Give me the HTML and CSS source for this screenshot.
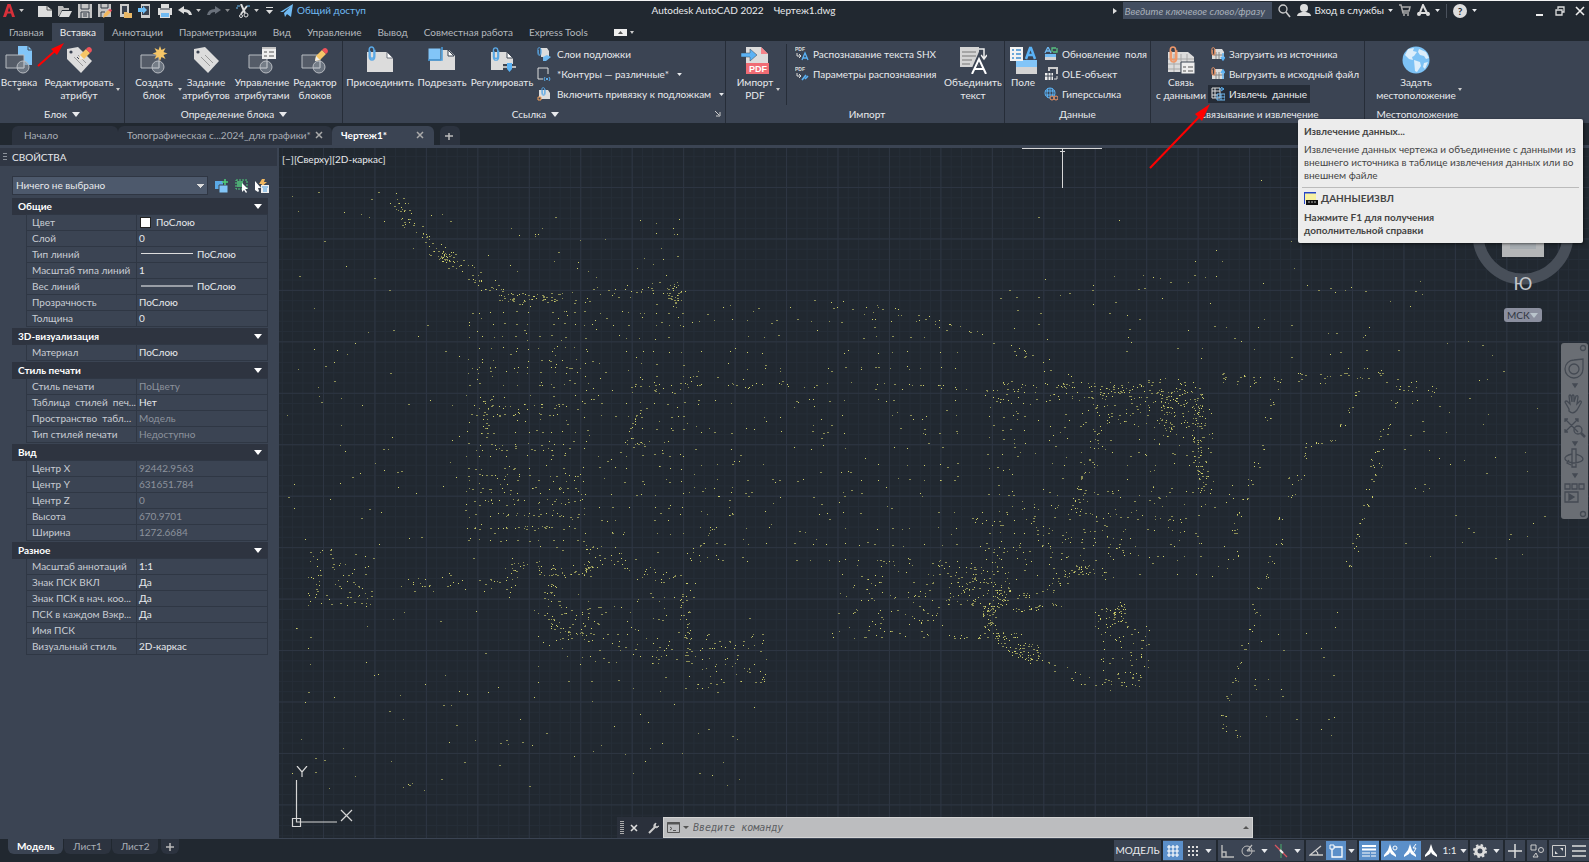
FILE: index.html
```html
<!DOCTYPE html>
<html lang="ru">
<head>
<meta charset="utf-8">
<title>Autodesk AutoCAD 2022 — Чертеж1.dwg</title>
<link rel="stylesheet" href="styles.css">
</head>
<body>
<svg class="defs" aria-hidden="true">
  <defs>
    <symbol id="caret" viewBox="0 0 8 5"><path d="M0 0h8L4 5z" fill="currentColor"/></symbol>
    <symbol id="block" viewBox="0 0 28 28"><path d="M1 9h18v13H1z" fill="#555c68" stroke="#b8bcc2"/><circle cx="18" cy="21" r="6" fill="#8b929d" fill-opacity=".6" stroke="#b8bcc2"/><path d="M19 15v7h-7" fill="none" stroke="#b8bcc2"/></symbol>
    <symbol id="tag" viewBox="0 0 28 28"><path d="M2 3l11-2 14 14-11 12L2 13z" fill="#dcdcdc"/><circle cx="6" cy="6" r="1.6" fill="#3b4453"/><path d="M9 11l9 9M13 9l8 8" stroke="#9a9a9a" fill="none"/></symbol>
    <symbol id="pencil" viewBox="0 0 14 14"><path d="M1 13l1-5 6-6 4 4-6 6z" fill="#f6c667"/><path d="M8 2l1.500-1.500q2-1 3.500.5t.5 3.500L12 6z" fill="#f0525a"/><path d="M1 13l1-5 4 4z" fill="#eee"/></symbol>
    <symbol id="sheet" viewBox="0 0 28 28"><path d="M1 6h20l6 6v14H1z" fill="#dcdcdc"/><path d="M21 6v6h6z" fill="#fff" stroke="#3b4453" stroke-width=".7"/></symbol>
    <symbol id="clip" viewBox="0 0 8 16"><path d="M2 5v6q0 2 2 2t2-2V4q0-3-2.500-3T1 4v7q0 4 3 4t3-4V4" fill="none" stroke="currentColor" stroke-width="1.500"/></symbol>
    <symbol id="arrowA" viewBox="0 0 14 14"><path d="M7 0l2 6 4 5v2L8 10 7 8l-1 2-5 3v-2l4-5z" fill="#fff"/></symbol>
  </defs>
</svg>

<header class="titlebar">
  <div class="quick">
    <button class="app" aria-label="Меню приложения"><svg viewBox="0 0 12 13" width="12" height="13"><path d="M0 13L4.500 0h3L12 13H9L8 9.500H4.500L3 13zM5 7.500h2.500L6 3z" fill="#d8303a"/></svg><svg class="c" width="5" height="3"><use href="#caret"/></svg></button>
    <button aria-label="Новый"><svg width="14" height="14"><path d="M0 2h9l5 4v7H0z" fill="#ddd"/><path d="M9 2v4h5" fill="none" stroke="#555"/></svg></button>
    <button aria-label="Открыть"><svg width="14" height="14"><path d="M0 2h5l1 2h5v2H4L1 12H0z" fill="#b9b9b9"/><path d="M4 7h10l-3 6H1z" fill="#ddd"/></svg></button>
    <button aria-label="Сохранить"><svg width="14" height="14"><path d="M0 0h14v14H0z" fill="#c4c4c4"/><path d="M3 0v5h8V0M3 14V8h8v6M5 10h4M5 12h4" fill="none" stroke="#333b47"/></svg></button>
    <button aria-label="Сохранить как"><svg width="14" height="14"><path d="M0 0h13v13H0z" fill="#c4c4c4"/><path d="M3 0v4h7V0M3 13V8h4" fill="none" stroke="#333b47"/><path d="M5 14l1-4 4-4 3 2-4 4z" fill="#f2b860"/><path d="M10 6l3 2 1-2-2-1z" fill="#ed4c5c"/></svg></button>
    <button aria-label="Открыть с устройства"><svg width="14" height="14"><path d="M2 0h9v13H2z" fill="#ccc"/><path d="M4 2h5v8H4z" fill="#3a4250"/><path d="M6 8h3l1 1h4v5H6z" fill="#e9b765"/></svg></button>
    <button aria-label="Сохранить на устройство"><svg width="14" height="14"><path d="M3 0h9v14H3z" fill="#ccc"/><path d="M4 2h7v9H4z" fill="#3a4250"/><path d="M0 4h5V2l4 4-4 4V8H0z" fill="#6cbdf5"/></svg></button>
    <button aria-label="Печать"><svg width="14" height="14"><path d="M3 0h8v4h3v7h-2v3H2v-3H0V4h3z" fill="#ddd"/><path d="M2 5h10" stroke="#333b47"/><path d="M3 9h8v4H3z" fill="#70baf2"/></svg></button>
    <button aria-label="Отменить"><svg width="14" height="14"><path d="M0 6l6-4v3q7 0 8 6h-3q-1-3-5-3v2z" fill="#ddd"/></svg><svg class="c" width="5" height="3"><use href="#caret"/></svg></button>
    <button class="off" aria-label="Повторить"><svg width="14" height="14"><path d="M14 6L8 2v3q-7 0-8 6h3q1-3 5-3v2z" fill="#6a717b"/></svg><svg class="c" width="5" height="3"><use href="#caret"/></svg></button>
    <button aria-label="Вырезать"><svg width="14" height="14"><path d="M5 0l4 9M11 2L5 10" stroke="#ddd" stroke-width="2"/><circle cx="10" cy="11" r="2" fill="none" stroke="#ddd"/><circle cx="5" cy="12" r="1.500" fill="none" stroke="#ddd"/><path d="M1 2h3M0 4h2M11 2h3" stroke="#6cbdf5"/></svg><svg class="c" width="5" height="3"><use href="#caret"/></svg></button>
    <button aria-label="Настройка панели"><svg width="9" height="10"><path d="M1 1h7v1H1zM1 4h7L4.500 8z" fill="#ddd"/></svg></button>
    <button class="share"><svg width="13" height="13"><path d="M0 8L13 0l-2 13-4-3-2 3-1-4 6-6-7 5z" fill="#70baf2"/></svg>Общий доступ</button>
  </div>
  <div class="apptitle"><span>Autodesk AutoCAD 2022</span><span>Чертеж1.dwg</span></div>
  <div class="account">
    <svg width="4" height="6"><path d="M0 0l4 3-4 3z" fill="#ddd"/></svg>
    <input class="search" type="text" placeholder="Введите ключевое слово/фразу" aria-label="Поиск">
    <button aria-label="Найти"><svg width="13" height="14"><circle cx="5" cy="5" r="4" fill="none" stroke="#ccc" stroke-width="1.300"/><path d="M8 8l4 5" stroke="#ccc" stroke-width="1.600"/></svg></button>
    <button class="login"><svg width="14" height="13"><circle cx="7" cy="4" r="4" fill="#ddd"/><path d="M0 12q0-3 5-4h4q5 1 5 4z" fill="#ddd"/></svg>Вход в службы<svg class="c" width="5" height="3"><use href="#caret"/></svg></button>
    <button aria-label="Магазин"><svg width="12" height="13"><path d="M0 1h2l2 8h6M3 3h8l-1 4H4" fill="none" stroke="#aaa" stroke-width="1.500"/><circle cx="5" cy="11" r="1" fill="#aaa"/><circle cx="9" cy="11" r="1" fill="#aaa"/></svg></button>
    <button aria-label="Autodesk App Store"><svg width="13" height="13"><path d="M2 11L6 1l5 10M1 9h11" fill="none" stroke="#ddd" stroke-width="2"/><circle cx="2" cy="10" r="2" fill="#ddd"/><circle cx="11" cy="10" r="2" fill="#ddd"/></svg><svg class="c" width="5" height="3"><use href="#caret"/></svg></button>
    <i class="vsep"></i>
    <button class="help" aria-label="Справка"><b>?</b><svg class="c" width="5" height="3"><use href="#caret"/></svg></button>
    <div class="win">
      <button aria-label="Свернуть"><svg width="10" height="10"><path d="M1 9h7" stroke="#eee" stroke-width="2"/></svg></button>
      <button aria-label="Восстановить"><svg width="10" height="10"><path d="M3 3V1h6v5H7M1 4h6v5H1z" fill="none" stroke="#ddd" stroke-width="1.300"/></svg></button>
      <button aria-label="Закрыть"><svg width="10" height="10"><path d="M1 1l8 8M9 1L1 9" stroke="#eee" stroke-width="1.600"/></svg></button>
    </div>
  </div>
</header>

<nav class="menu">
  <button>Главная</button><button class="on">Вставка</button><button>Аннотации</button><button>Параметризация</button><button>Вид</button><button>Управление</button><button>Вывод</button><button>Совместная работа</button><button>Express Tools</button>
  <button aria-label="Вид ленты" class="mini"><svg width="20" height="7"><path d="M0 0h13v7H0z" fill="#eee"/><path d="M4 5l2.500-3L9 5z" fill="#555"/><path d="M16 2h4l-2 3z" fill="#ccc"/></svg></button>
</nav>

<section class="ribbon">
  <div class="panel p-block">
    <div class="tools">
      <button class="big w38 down"><svg width="28" height="28" viewBox="0 0 28 28"><path d="M13 0h10l4 4v15H13z" fill="#82c5f8"/><path d="M23 0v4h4" fill="none" stroke="#3b4453"/><use href="#block"/></svg><span>Вставка</span></button>
      <button class="big w80 side"><svg width="28" height="28" viewBox="0 0 28 28"><use href="#tag"/><path d="M15 14l-3-3" stroke="#3b4453"/><use href="#pencil" x="13" y="1" width="14" height="14"/></svg><span>Редактировать<br>атрибут</span></button>
    </div>
    <h2>Блок <svg width="8" height="5"><use href="#caret"/></svg></h2>
  </div>
  <div class="panel p-def">
    <div class="tools">
      <button class="big w56 side"><svg width="28" height="28" viewBox="0 0 28 28"><use href="#block"/><path d="M20 0l1.500 4 4-2-2 4 4 1.500-4 1.500 2 4-4-2-1.500 4-1.500-4-4 2 2-4-4-1.500 4-1.500-2-4 4 2z" fill="#f6c667"/></svg><span>Создать<br>блок</span></button>
      <button class="big w48"><svg width="28" height="28"><use href="#tag"/></svg><span>Задание<br>атрибутов</span></button>
      <button class="big w64"><svg width="28" height="28" viewBox="0 0 28 28"><use href="#block"/><path d="M14 1h14v12H14z" fill="#eee"/><path d="M14 2h14" stroke="#999"/><path d="M16 6h3M16 10h3M21 6h5M21 10h5" stroke="#555"/></svg><span>Управление<br>атрибутами</span></button>
      <button class="big w42"><svg width="28" height="28" viewBox="0 0 28 28"><use href="#block"/><use href="#pencil" x="13" y="2" width="14" height="14"/></svg><span>Редактор<br>блоков</span></button>
    </div>
    <h2>Определение блока <svg width="8" height="5"><use href="#caret"/></svg></h2>
  </div>
  <div class="panel p-ref">
    <div class="tools">
      <button class="big w68"><svg class="blue" width="28" height="28" viewBox="0 0 28 28"><use href="#sheet"/><use href="#clip" x="2" y="0" width="8" height="15"/></svg><span>Присоединить</span></button>
      <button class="big w56"><svg width="28" height="28" viewBox="0 0 28 28"><path d="M2 4h19l6 6v14H2z" fill="#dcdcdc"/><path d="M20 4v6h6z" fill="#fff" stroke="#3b4453"/><path d="M0 2h13v12H0z" fill="#82c5f8" stroke="#3b4453"/><path d="M0 14h14V1" fill="none" stroke="#4a9fe0" stroke-width="1.500"/></svg><span>Подрезать</span></button>
      <button class="big w64"><svg class="blue" width="28" height="28" viewBox="0 0 28 28"><path d="M3 6h16l6 6v12H3z" fill="#dcdcdc"/><path d="M19 6v6h6z" fill="#fff" stroke="#3b4453"/><use href="#clip" x="4" y="1" width="8" height="14"/><path d="M15 21h13" stroke="#3b4453" stroke-width="6"/><path d="M15 21h13" stroke="#bbb" stroke-width="2"/><path d="M19 17h5v6l-2.500 3-2.500-3z" fill="#5ab2f5"/></svg><span>Регулировать</span></button>
      <div class="stack">
        <button class="small"><svg class="blue" width="14" height="14" viewBox="0 0 14 14"><path d="M4 1h6l2 3v6H4z" fill="#ddd"/><use href="#clip" x="0" y="0" width="5" height="9"/><path d="M6 10l4-2 4 2-5 4H6z" fill="#70baf2"/></svg>Слои подложки</button>
        <button class="small"><svg width="14" height="14"><path d="M11 7V1H1v11h5" fill="none" stroke="#ddd"/><path d="M8 10q-2 2 0 4M12 10q2 2 0 4M9 11l2 2M11 11l-2 2" fill="none" stroke="#5aa9e6"/></svg>*Контуры — различные*<svg class="c" width="5" height="3"><use href="#caret"/></svg></button>
        <button class="small"><svg class="blue" width="14" height="14" viewBox="0 0 14 14"><path d="M2 3h9l2 3v6H2z" fill="#ddd"/><use href="#clip" x="4" y="0" width="5" height="9"/><path d="M1 10h3v3H1z" fill="#3b4453" stroke="#f5a05a"/></svg>Включить привязку к подложкам<svg class="c" width="5" height="3"><use href="#caret"/></svg></button>
      </div>
    </div>
    <h2>Ссылка <svg width="8" height="5"><use href="#caret"/></svg></h2>
    <svg class="launcher" width="6" height="6"><path d="M0 0l4 4M5 1v4H1" stroke="#ccc" fill="none"/></svg>
  </div>
  <div class="panel p-imp">
    <div class="tools">
      <button class="big w50 side"><svg width="28" height="28" viewBox="0 0 28 28"><path d="M5 1h15l7 7v20H5z" fill="#dcdcdc"/><path d="M20 1v7h7z" fill="#f48288"/><path d="M5 17h23v11H5z" fill="#f06c74"/><path d="M0 7h9V3l7 6-7 6v-4H0z" fill="#5ab2f5" stroke="#3b4453" stroke-width=".5"/><text class="pdf" x="8" y="26">PDF</text></svg><span>Импорт<br>PDF</span></button>
      <i class="rule"></i>
      <div class="stack tight">
        <button class="small"><svg width="14" height="14"><text class="pdf-s" x="0" y="4">PDF</text><path d="M2 6v3h3M4 7l2 2-2 2" fill="none" stroke="#ddd"/><path d="M7 13l3-7 3 7M8 11h4" fill="none" stroke="#5ab2f5" stroke-width="1.300"/></svg>Распознавание текста SHX</button>
        <button class="small"><svg width="14" height="14"><text class="pdf-s" x="0" y="4">PDF</text><path d="M2 6v3h3M4 7l2 2-2 2" fill="none" stroke="#ddd"/><path d="M7 13l4-5M10 12l3-3" fill="none" stroke="#5ab2f5" stroke-width="1.600"/></svg>Параметры распознавания</button>
      </div>
      <button class="big w62"><svg width="28" height="28" viewBox="0 0 28 28"><path d="M1 1h19v20H1z" fill="#d4d4d4"/><path d="M3 6h14M3 10h14M3 14h10M3 18h8" stroke="#777"/><path d="M20 3h5v9M22 9l3 4 3-4" fill="none" stroke="#eee" stroke-width="1.500"/><path d="M13 28l7-16 7 16M15 22h10" fill="none" stroke="#3b4453" stroke-width="5"/><path d="M13 28l7-15 7 15M16 23h8" fill="none" stroke="#fff" stroke-width="2"/></svg><span>Объединить<br>текст</span></button>
    </div>
    <h2>Импорт</h2>
  </div>
  <div class="panel p-data">
    <div class="tools">
      <button class="big w36"><svg width="28" height="28" viewBox="0 0 28 28"><path d="M7 15h21v13H7z" fill="#d4d4d4"/><path d="M7 14h21v7H7z" fill="#82c5f8"/><path d="M1 1h13v14H1z" fill="#f2f2f2"/><path d="M3 4h2M3 8h2M3 12h2M7 4h5M7 8h5M7 12h5" stroke="#3f8fd0" stroke-width="1.500"/><path d="M17 13l4-11h1l4 11M18 9h7" fill="none" stroke="#5ab2f5" stroke-width="2.500"/></svg><span>Поле</span></button>
      <div class="stack">
        <button class="small"><svg width="14" height="14"><path d="M1 7h11v6H1z" fill="#d4d4d4"/><path d="M1 7h11v3H1z" fill="#70baf2"/><path d="M1 6l3-6 3 6M2 4h4" fill="none" stroke="#70baf2" stroke-width="1.300"/><path d="M8 5V1h4M13 1v4H9" fill="none" stroke="#58c080" stroke-width="1.300"/></svg>Обновление&nbsp; поля</button>
        <button class="small"><svg width="14" height="14"><path d="M1 6h8v7H1z" fill="#eee"/><path d="M1 9h8M4 6v7M7 6v7" stroke="#3b4453"/><path d="M5 4V1h8v6" stroke="#ccc" stroke-width="2" fill="none"/><path d="M10 12h3V9" stroke="#ddd" fill="none"/></svg>OLE-объект</button>
        <button class="small"><svg width="14" height="14"><g fill="none" stroke="#5ab2f5"><circle cx="6" cy="6" r="5"/><path d="M1 4h10M1 8h10M6 1v10M4 1q-2 5 0 10M8 1q2 5 0 10"/><path d="M6 11h8" stroke="#3b4453" stroke-width="4"/><circle cx="8" cy="11" r="2" stroke="#f0986a"/><circle cx="12" cy="11" r="2" stroke="#f0986a"/></g></svg>Гиперссылка</button>
      </div>
    </div>
    <h2>Данные</h2>
  </div>
  <div class="panel p-link">
    <div class="tools">
      <button class="big w54"><svg class="coral" width="28" height="28" viewBox="0 0 28 28"><path d="M1 6h20l6 5v15H1z" fill="#dcdcdc"/><path d="M1 13h26M1 18h26M1 23h26M7 8v18M14 8v18M20 8v18" stroke="#a8a8a8"/><use href="#clip" x="1" y="0" width="11" height="17"/><path d="M14 16h14v12H14z" fill="#eee" stroke="#3b4453"/><path d="M16 21h3M16 25h3M21 21h5M21 25h5" stroke="#555"/></svg><span>Связь<br>с данными</span></button>
      <div class="stack">
        <button class="small"><svg class="coral" width="14" height="14" viewBox="0 0 14 14"><path d="M4 2h7l2 3v7H1V8h3z" fill="#ddd"/><path d="M5 5v7M8 5v7M3 8h10" stroke="#888"/><use href="#clip" x="0" y="0" width="5" height="9"/><path d="M12 6v6M10 10l2 3 2-3" stroke="#5ab2f5" fill="none" stroke-width="1.400"/></svg>Загрузить из источника</button>
        <button class="small"><svg class="coral" width="14" height="14" viewBox="0 0 14 14"><path d="M4 2h7l2 3v7H1V8h3z" fill="#ddd"/><path d="M5 5v7M8 5v7M3 8h10" stroke="#888"/><use href="#clip" x="0" y="0" width="5" height="9"/><path d="M12 12V4M10 6l2-3 2 3" stroke="#5ab2f5" fill="none" stroke-width="1.400"/></svg>Выгрузить в исходный файл</button>
        <button class="small hot"><svg width="14" height="14"><path d="M1 1h8v10H1zM1 4h8M1 8h6M4 1v10" stroke="#ddd" fill="none"/><path d="M6 7h8v6H6zM6 10h8M10 7v6" stroke="#70baf2" fill="none"/><path d="M8 2h4M10 0l3 2-3 2" stroke="#5ab2f5" fill="none"/></svg>Извлечь&nbsp; данные</button>
      </div>
    </div>
    <h2>Связывание и извлечение</h2>
  </div>
  <div class="panel p-loc">
    <div class="tools">
      <button class="big w90 side"><svg width="28" height="28"><circle cx="14" cy="14" r="13.500" fill="#7dc2f5"/><path d="M6 3l6-1-1 3 4 1-3 4-2 1 1 3-4-1-4-4zM17 3l7 3 3 6-3 1-2-3-4-1-2-3zM12 14l6 2 1 4-4 6-2-1zM22 17l4-1-3 7-2-2z" fill="#dceefb"/></svg><span>Задать<br>местоположение</span></button>
    </div>
    <h2>Местоположение</h2>
  </div>
</section>

<nav class="files">
  <button class="f-start">Начало</button>
  <button class="f-topo">Топографическая с...2024_для графики*<svg width="8" height="8"><path d="M1 1l6 6M7 1L1 7" stroke="#aaa" stroke-width="1.500"/></svg></button>
  <button class="f-cur on">Чертеж1*<svg width="8" height="8"><path d="M1 1l6 6M7 1L1 7" stroke="#aaa" stroke-width="1.500"/></svg></button>
  <button class="plus" aria-label="Новый чертеж"><svg width="8" height="8"><path d="M4 1v7M0 4h8" stroke="#bbb" stroke-width="1.500"/></svg></button>
</nav>

<main class="work">
  <aside class="props">
    <h1><i class="grip"></i>СВОЙСТВА</h1>
    <div class="pick">
      <select aria-label="Выбор объектов"><option>Ничего не выбрано</option></select>
      <button aria-label="Переключить PICKADD"><svg width="14" height="14"><path d="M0 2h8v8H0z" fill="#5aa9e6"/><path d="M4 6h9v8H4z" fill="#82c5f8" stroke="#3b4453"/><path d="M10 0v6M7 3h6" stroke="#4fd07c" stroke-width="1.500"/></svg></button>
      <button aria-label="Выбрать объекты"><svg width="14" height="14"><path d="M1 1h11v9H1z" fill="none" stroke="#4fd07c" stroke-dasharray="2 1"/><path d="M2 2h6v6H2z" fill="#4eaa74"/><path d="M7 4l6 6H10l2 3-1 1-2-3-2 2z" fill="#fff"/></svg></button>
      <button aria-label="Быстрый выбор"><svg width="14" height="14"><path d="M7 0L4 5h3L5 9l7-6H9l1-3z" fill="#f2b860"/><path d="M0 2l6 7H3l1 3-1 1-3-2z" fill="#fff"/><path d="M6 6h8v8H6z" fill="#eee"/><path d="M7 8h6M8 10h4M8 12h4" stroke="#4a9fe0"/></svg></button>
    </div>
    <section><h3>Общие<svg width="8" height="5"><use href="#caret"/></svg></h3>
      <table>
        <tr><th>Цвет</th><td class="lit"><i class="swatch"></i>ПоСлою</td></tr>
        <tr><th>Слой</th><td class="lit">0</td></tr>
        <tr><th>Тип линий</th><td class="lit"><i class="ltype"></i>ПоСлою</td></tr>
        <tr><th>Масштаб типа линий</th><td class="lit">1</td></tr>
        <tr><th>Вес линий</th><td class="lit"><i class="ltype fat"></i>ПоСлою</td></tr>
        <tr><th>Прозрачность</th><td class="lit">ПоСлою</td></tr>
        <tr><th>Толщина</th><td class="lit">0</td></tr>
      </table></section>
    <section><h3>3D-визуализация<svg width="8" height="5"><use href="#caret"/></svg></h3>
      <table><tr><th>Материал</th><td class="lit">ПоСлою</td></tr></table></section>
    <section><h3>Стиль печати<svg width="8" height="5"><use href="#caret"/></svg></h3>
      <table>
        <tr><th>Стиль печати</th><td>ПоЦвету</td></tr>
        <tr><th>Таблица&nbsp; стилей&nbsp; печ...</th><td class="lit">Нет</td></tr>
        <tr><th>Пространство&nbsp; табли...</th><td>Модель</td></tr>
        <tr><th>Тип стилей печати</th><td>Недоступно</td></tr>
      </table></section>
    <section><h3>Вид<svg width="8" height="5"><use href="#caret"/></svg></h3>
      <table>
        <tr><th>Центр X</th><td>92442.9563</td></tr>
        <tr><th>Центр Y</th><td>631651.784</td></tr>
        <tr><th>Центр Z</th><td>0</td></tr>
        <tr><th>Высота</th><td>670.9701</td></tr>
        <tr><th>Ширина</th><td>1272.6684</td></tr>
      </table></section>
    <section><h3>Разное<svg width="8" height="5"><use href="#caret"/></svg></h3>
      <table>
        <tr><th>Масштаб аннотаций</th><td class="lit">1:1</td></tr>
        <tr><th>Знак ПСК ВКЛ</th><td class="lit">Да</td></tr>
        <tr><th>Знак ПСК в нач. коо...</th><td class="lit">Да</td></tr>
        <tr><th>ПСК в каждом Вэкр...</th><td class="lit">Да</td></tr>
        <tr><th>Имя ПСК</th><td></td></tr>
        <tr><th>Визуальный стиль</th><td class="lit">2D-каркас</td></tr>
      </table></section>
  </aside>

  <div class="canvas">
    <svg class="drawing" id="drawing" width="100%" height="100%" aria-label="Чертеж">
      <defs>
        <pattern id="minor" width="10.290" height="10.290" patternUnits="userSpaceOnUse" patternTransform="translate(44 39)"><path d="M.5 0v10.290M0 .5h10.290" stroke="#252d37"/></pattern>
        <pattern id="major" width="51.450" height="51.450" patternUnits="userSpaceOnUse" patternTransform="translate(44 39)"><path d="M.5 0v51.450M0 .5h51.450" stroke="#2d3542"/></pattern>
      </defs>
      <rect width="100%" height="100%" fill="url(#minor)"/>
      <rect width="100%" height="100%" fill="url(#major)"/>
      <path id="points" stroke="#8d8f55" fill="none" transform="translate(-279 -148)"/>
      <path id="bright" stroke="#cfd06a" fill="none" transform="translate(-279 -148)"/>
      <path d="M743 .5h80M783.500 1v39M781 3h5" stroke="#d8d8d8" fill="none"/>
    </svg>
    <span class="vplabel">[−][Сверху][2D-каркас]</span>
    <svg class="ucs" width="64" height="64"><path d="M5.500 14v42H46M1.500 52.500h8v8h-8zM6 0l5 6 5-6M11 6v5M50 44l11 11M61 44L50 55" fill="none" stroke="#d6d6d6" stroke-width="1.200"/></svg>
    <div class="cube">
      <svg width="102" height="104"><circle cx="51" cy="51" r="45" fill="none" stroke="#484f59" stroke-width="11"/><path d="M30 30h42v44H30z" fill="#b4b6b8"/><path d="M38 36h26v30H38z" fill="#a5abb0"/></svg>
      <span>Ю</span>
      <button>МСК<svg width="8" height="5"><path d="M0 0h8L4 5z" fill="#b9c4cc"/></svg></button>
    </div>
    <div class="navbar">
      <svg width="27" height="176" fill="none" stroke="#444a53" stroke-width="1.300"><circle cx="22" cy="5" r="2.500"/><path d="M22 16v10a9 9 0 1 1-9-9z"/><circle cx="13" cy="26" r="5"/><path d="M12 41h4l-2 3z" fill="#444a53"/><path d="M8 66l-4-7q1-2 3 0l2 2-1-8q1-2 2 0l1 6V53q1-2 2 0v6l2-6q2-1 2 1l-1 7 3-3q2 0 1 2l-4 7q-4 5-8 1z"/><path d="M4 76l13 13M17 76L4 89M4 79v-3h3M14 76h3v3M4 86v3h3"/><circle cx="17" cy="87" r="4"/><path d="M20 90l4 4" stroke-width="2.500"/><path d="M12 99h4l-2 3zM12 131h4l-2 3z" fill="#444a53"/><path d="M11 106v18h4v-18zM11 111q-8 2-7 5t9 4q9-1 9-4t-7-5M8 117l-2 3 4 2M4 141h5v5H4zM11 141h5v5h-5zM18 141h5v5h-5zM4 149h13v10H4z"/><path d="M8 151l5 3-5 3z" fill="#444a53"/><circle cx="22" cy="171" r="2.500"/></svg>
    </div>
    <div class="cmd">
      <div class="cmdtools"><i class="grip"></i><button aria-label="Закрыть"><svg width="8" height="8"><path d="M1 1l6 6M7 1L1 7" stroke="#ddd" stroke-width="1.600"/></svg></button><button aria-label="Настройка"><svg width="12" height="12"><path d="M1 11l6-6" stroke="#ccc" stroke-width="2"/><path d="M8 1q-3 1-2 4 3 2 5-1l-2 1-2-1z" fill="#ccc" stroke="#ccc"/></svg></button></div>
      <label class="cmdline"><svg width="22" height="11"><path d="M.5.500h12v10H.5z" fill="none" stroke="#555"/><path d="M0 1.500h13" stroke="#555" stroke-width="2"/><path d="M3 5l2 1.500-2 1.500M6 8.500h3" fill="none" stroke="#555"/><path d="M16 4h6l-3 3z" fill="#555"/></svg><input type="text" placeholder="Введите команду" aria-label="Командная строка"><svg width="6" height="4"><path d="M0 3l3-3 3 3z" fill="#555"/></svg></label>
    </div>
  </div>
</main>

<footer class="bottom">
  <nav class="sheets"><button class="on">Модель</button><button>Лист1</button><button>Лист2</button><button class="plus" aria-label="Новый лист"><svg width="8" height="8"><path d="M4 0v8M0 4h8" stroke="#bbb" stroke-width="1.500"/></svg></button></nav>
  <div class="status">
    <div><button class="model">МОДЕЛЬ</button></div>
    <div><button class="blue-on" aria-label="Сетка"><svg width="14" height="14"><path d="M3 1v12M7 1v12M11 1v12M1 3h12M1 7h12M1 11h12" stroke="#fff" stroke-width="1.200"/></svg></button><button class="wide" aria-label="Шаг"><svg width="12" height="12"><path d="M1 2h12M1 6h12M1 10h12" stroke="#ddd" stroke-width="2" stroke-dasharray="2 2"/></svg><svg class="c2" width="7" height="4"><use href="#caret"/></svg></button></div>
    <div><button aria-label="Орто"><svg width="14" height="14"><path d="M1 1v12h12M1 8h4v5" fill="none" stroke="#bbb" stroke-width="1.400"/></svg></button><button class="wide" aria-label="Полярное отслеживание"><svg width="14" height="14"><circle cx="6" cy="7" r="5" fill="none" stroke="#bbb"/><path d="M6 7h8M6 7l5-6M9 7l-1-3" fill="none" stroke="#bbb" stroke-width="1.200"/></svg><svg class="c2" width="7" height="4"><use href="#caret"/></svg></button><button class="wide" aria-label="Изометрия"><svg width="14" height="14"><path d="M7 0v14" stroke="#4aae6c"/><path d="M1 1l12 12" stroke="#d95560" stroke-width="1.300"/><path d="M6 6l3 3" stroke="#eee" stroke-width="2"/></svg><svg class="c2" width="7" height="4"><use href="#caret"/></svg></button></div>
    <div><button aria-label="Объектное отслеживание"><svg width="14" height="14"><path d="M12 2L1 11h13M7 7q2 1 2 4" fill="none" stroke="#ccc" stroke-width="1.300"/></svg></button><button class="blue-on" aria-label="Объектная привязка"><svg width="14" height="14"><path d="M3 3h10v10H3z" fill="none" stroke="#fff" stroke-width="1.300"/><path d="M1 1h4v4H1z" fill="#5b8fc9" stroke="#fff"/></svg></button><button class="narrow" aria-label="Параметры привязки"><svg class="c2" width="7" height="4"><use href="#caret"/></svg></button></div>
    <div><button class="blue-on" aria-label="Вес линий"><svg width="14" height="14"><path d="M0 2h14M0 5.500h14" stroke="#fff" stroke-width="2"/><path d="M0 9h14M0 12h14" stroke="#fff" stroke-dasharray="8 1 5"/></svg></button></div>
    <div><button class="blue-on" aria-label="Аннотации"><svg width="14" height="14"><use href="#arrowA" x="-1" y="0" width="14" height="14"/><circle cx="11" cy="4" r="2" fill="none" stroke="#fff"/></svg></button><button class="blue-on" aria-label="Автомасштаб"><svg width="14" height="14"><use href="#arrowA" x="-1" y="0" width="14" height="14"/><path d="M12 0L9 4h3l-2 4" fill="none" stroke="#fff"/></svg></button><button aria-label="Масштаб аннотаций"><svg width="14" height="14"><use href="#arrowA"/></svg></button><button class="scale">1:1<svg class="c2" width="7" height="4"><use href="#caret"/></svg></button></div>
    <div><button class="wide" aria-label="Настройки"><svg width="14" height="14"><circle cx="7" cy="7" r="4" fill="none" stroke="#ddd" stroke-width="3"/><circle cx="7" cy="7" r="6" fill="none" stroke="#ddd" stroke-width="2" stroke-dasharray="2.400 2.300"/></svg><svg class="c2" width="7" height="4"><use href="#caret"/></svg></button></div>
    <div><button aria-label="Добавить"><svg width="14" height="14"><path d="M7 0v14M0 7h14" stroke="#ddd" stroke-width="1.500"/></svg></button></div>
    <div><button aria-label="Изоляция"><svg width="14" height="14"><path d="M1 1h5v5H1zM8 13l-2-4-3 4z" fill="none" stroke="#ccc"/><circle cx="11" cy="6" r="2.500" fill="none" stroke="#ccc"/></svg></button></div>
    <div><button aria-label="Полный экран"><svg width="14" height="12"><path d="M.5.500h13v11H.5z" fill="none" stroke="#ccc"/><path d="M3 9V6l3 3zM11 3v3L8 3z" fill="#ddd"/></svg></button><button aria-label="Настройка"><svg width="14" height="12"><path d="M0 1h14M0 6h14M0 11h14" stroke="#ddd" stroke-width="1.500"/></svg></button></div>
  </div>
</footer>

<div class="tooltip" role="tooltip">
  <h4>Извлечение данных...</h4>
  <p>Извлечение данных чертежа и объединение с данными из внешнего источника в таблице извлечения данных или во внешнем файле</p>
  <hr>
  <div class="cmdname"><svg width="14" height="13"><path d="M0 0h12v9H0z" fill="#f7f1a0"/><path d="M0 .5h12" stroke="#2747c8" stroke-width="2"/><path d="M.5 0v12" stroke="#2747c8"/><path d="M2 8h12v5H2z" fill="#111"/><path d="M4 10h8" stroke="#bbb" stroke-dasharray="2 1"/></svg>ДАННЫЕИЗВЛ</div>
  <b>Нажмите F1 для получения<br>дополнительной справки</b>
</div>
<svg class="mark m1" width="28" height="26"><path d="M1 24L19 8" stroke="#f00" stroke-width="2"/><path d="M27 1L14 7l6 6z" fill="#f00"/></svg>
<svg class="mark m2" width="62" height="66"><path d="M1 65L52 12" stroke="#f00" stroke-width="2"/><path d="M61 1L46 11l7 7z" fill="#f00"/></svg>
<script src="points.js"></script>
</body>
</html>
```

FILE: styles.css
```css
* { box-sizing: border-box; }
body { margin: 0; height: 100vh; display: flex; flex-direction: column; overflow: hidden; background: #212830; color: #e8eaed; font: 10px/13px Lato, "Noto Sans", sans-serif; border-top: 1px solid #f4f4f4; }
button, input, select { font: inherit; color: inherit; background: none; border: 0; padding: 0; margin: 0; }
button { display: flex; align-items: center; white-space: nowrap; }
h1, h2, h3, h4, p { margin: 0; font: inherit; }
svg { flex: none; display: block; }
.defs { position: absolute; width: 0; height: 0; }

.titlebar { display: grid; grid-template-columns: 41% auto 1fr; align-items: center; height: 19px; flex: none; }
.quick { display: flex; align-items: center; gap: 6px; padding-left: 3px; }
.quick .c { margin-left: 4px; color: #ccc; }
.quick .app { margin-right: 8px; }
.off .c { opacity: .6; }
.share { gap: 4px; color: #70baf2; }
.apptitle { display: flex; gap: 10px; white-space: nowrap; }
.account { display: flex; align-items: center; justify-content: flex-end; gap: 6px; padding-right: 4px; }
.account .c { margin-left: 5px; }
.search { width: 149px; height: 17px; padding-left: 2px; background: #434e60; font-style: italic; }
.search::placeholder { color: #a7aeb9; opacity: 1; }
.login { gap: 4px; }
.login .c { margin-left: 0; }
.vsep { width: 1px; height: 14px; background: #4a515c; }
.help b { width: 14px; height: 14px; border-radius: 7px; background: #ddd; color: #212830; line-height: 14px; text-align: center; }
.win { display: flex; gap: 10px; margin-left: 52px; }

.menu { display: flex; height: 21px; align-items: flex-end; flex: none; padding-left: 1px; color: #b4b8be; }
.menu button { height: 18px; padding: 0 8px; }
.menu .on { background: #3b4453; color: #f0f0f0; }
.menu .mini { padding-left: 18px; }

.ribbon { display: flex; height: 82px; flex: none; background: #3b4453; }
.panel { position: relative; display: flex; flex-direction: column; flex: none; border-right: 1px solid #262d38; }
.tools { display: flex; height: 65px; }
.panel h2 { display: flex; align-items: center; justify-content: center; gap: 5px; height: 16px; }
.p-block { width: 125px; }
.p-def { width: 218px; padding-left: 1px; }
.p-ref { width: 383px; padding-left: 3px; }
.p-imp { width: 279px; padding-left: 4px; }
.p-data { width: 146px; }
.p-link { width: 214px; padding-left: 3px; }
.p-loc { width: 100px; border: 0; padding-left: 5px; }
.launcher { position: absolute; right: 4px; bottom: 6px; }
.big { position: relative; flex: none; flex-direction: column; padding-top: 5px; }
.big span { margin-top: 2px; }
.side::after, .down::after { content: ""; position: absolute; right: 0; top: 47px; border: 2px solid transparent; border-top: 3px solid #ccc; border-bottom: 0; }
.down::after { right: 17px; }
.w36 { width: 36px; } .w38 { width: 38px; } .w42 { width: 42px; } .w48 { width: 48px; } .w50 { width: 50px; } .w54 { width: 54px; }
.w56 { width: 56px; } .w62 { width: 62px; } .w64 { width: 64px; } .w68 { width: 68px; } .w80 { width: 82px; } .w90 { width: 92px; }
.blue { color: #5aa9e6; }
.coral { color: #f0986a; }
.stack { display: flex; flex-direction: column; gap: 2px; padding-top: 4px; flex: 1; align-items: flex-start; }
.small { gap: 4px; height: 18px; padding: 0 3px; }
.small .c { margin-left: 2px; }
.p-ref .small { gap: 6px; }
.hot { background: #252c37; }
.rule { width: 1px; height: 61px; margin: 3px 5px 0 6px; background: #262d38; }
.pdf { font: bold 9px "Liberation Sans", sans-serif; fill: #fff; }
.pdf-s { font: bold 5px "Liberation Sans", sans-serif; fill: #ddd; }

.files { display: flex; align-items: flex-end; height: 22px; flex: none; padding-left: 12px; }
.files button { height: 19px; padding: 0 12px 1px; background: #2c333f; color: #a9aeb6; border-radius: 6px 6px 0 0; justify-content: space-between; }
.f-start { width: 106px; }
.files .f-topo { width: 214px; padding: 0 9px 1px; }
.files .on { width: 102px; background: #3b4453; color: #fff; font-weight: bold; padding: 0 10px 1px 9px; }
.files .plus { width: 20px; padding: 0 5px; margin-left: 6px; }

.work { display: flex; flex: 1; min-height: 0; border-top: 3px solid #3b4453; border-bottom: 1px solid #3b4453; }
.props { width: 279px; flex: none; background: #3b4453; }
.props h1 { display: flex; align-items: center; gap: 5px; height: 18px; padding-left: 3px; background: #303744; width: 277px; }
.grip { width: 4px; height: 9px; background: repeating-linear-gradient(#8d939c 0 1px, transparent 1px 3px); }
.pick { display: flex; align-items: center; gap: 6px; height: 32px; padding: 10px 0 3px 12px; }
.pick select { width: 196px; height: 19px; margin-right: 1px; padding-left: 3px; background: #4d596c; border: 1px solid #2f3643; appearance: none; background-image: linear-gradient(to bottom left, #ddd 50%, transparent 50%), linear-gradient(to bottom right, #ddd 50%, transparent 50%); background-size: 4px 4px; background-position: right 6px center, right 2px center; background-repeat: no-repeat; }
.props section { width: 256px; margin: 0 0 1px 12px; }
.props h3 { display: flex; align-items: center; justify-content: space-between; height: 17px; padding: 0 6px; background: #2e3440; color: #fff; font-weight: bold; }
.props table { width: 242px; margin: -1px 0 0 14px; border-collapse: collapse; table-layout: fixed; line-height: 15px; }
.props th, .props td { height: 16px; padding: 0; border: 1px solid #2f3744; font-weight: normal; text-align: left; white-space: nowrap; overflow: hidden; text-overflow: ellipsis; }
.props th { width: 110px; padding-left: 5px; color: #c9cdd3; }
.props td { color: #8c929c; padding-left: 2px; }
.props .lit { color: #e8eaed; }
.swatch { display: inline-block; width: 11px; height: 11px; margin: 0 5px 0 1px; background: #fff; border: 1px solid #222; vertical-align: -2px; }
.ltype { display: inline-block; width: 52px; height: 1px; margin: 0 4px 0 2px; background: #ddd; vertical-align: 4px; }
.fat { height: 2px; background: #999ea6; vertical-align: 3px; }

.canvas { position: relative; flex: 1; min-width: 0; overflow: hidden; }
.drawing { position: absolute; inset: 0; shape-rendering: crispEdges; }
.vplabel { position: absolute; left: 3px; top: 5px; }
.ucs { position: absolute; left: 12px; bottom: 8px; }
.cube { position: absolute; right: 15px; top: 35px; width: 102px; text-align: center; }
.cube span { position: absolute; left: 0; right: 0; top: 89px; font-size: 18px; line-height: 22px; color: #c3c6ca; }
.cube button { width: 38px; height: 14px; margin: 21px auto 0; padding: 0 4px 0 3px; justify-content: space-between; border-radius: 3px; background: #8b8f9f; color: #30363f; }
.navbar { position: absolute; right: 1px; top: 195px; border-radius: 3px; background: #6a6e74; }
.cmd { position: absolute; left: 338px; bottom: 0; width: 636px; height: 21px; display: flex; }
.cmdtools { display: flex; align-items: center; gap: 6px; width: 46px; padding-left: 3px; background: #2a303b; flex: none; }
.cmdtools .grip { height: 14px; background: repeating-linear-gradient(#aaa 0 1px, transparent 1px 2px); }
.cmdtools button + button { margin-left: 4px; }
.cmdline { flex: 1; display: flex; align-items: center; gap: 4px; padding: 0 3px; background: #bcbdbf; border: 1px solid #d4d4d4; }
.cmdline input { flex: 1; height: 18px; font: italic 10px/18px "DejaVu Sans Mono", monospace; }
.cmdline input::placeholder { color: #5c5f63; opacity: 1; }

.bottom { display: flex; justify-content: space-between; align-items: flex-start; height: 23px; flex: none; }
.sheets { display: flex; padding-left: 8px; }
.sheets button { height: 15px; padding: 0 9px; margin-right: 1px; background: #2c333f; color: #a9aeb6; border-radius: 0 0 6px 6px; }
.sheets .on { background: #3b4453; color: #fff; font-weight: bold; }
.sheets .plus { padding: 0 5px; margin-left: 2px; }
.status { display: flex; gap: 2px; padding-top: 1px; }
.status div { display: flex; background: #3b4453; height: 21px; }
.status button { min-width: 20px; justify-content: center; }
.status .blue-on { background: #5b8fc9; border: solid #3b4453; border-width: 1px 0; }
.status .wide { width: 33px; gap: 6px; }
.status .narrow { min-width: 11px; }
.status .model { width: 47px; }
.status .scale { width: 27px; gap: 3px; }

.tooltip { position: absolute; left: 1298px; top: 119px; width: 285px; padding: 6px; background: #ececec; color: #444; border-radius: 2px; box-shadow: 1px 1px 3px #0008; }
.tooltip h4, .tooltip b { font-weight: bold; }
.tooltip p { margin-top: 5px; }
.tooltip hr { margin: 5px -2px 4px; border: 0; border-top: 1px solid #bbb; }
.tooltip b { display: block; margin-top: 6px; }
.cmdname { display: flex; align-items: center; gap: 3px; font-weight: bold; }
.mark { position: absolute; pointer-events: none; }
.m1 { left: 37px; top: 42px; }
.m2 { left: 1149px; top: 103px; }
```

FILE: points.js
```js
// Survey points: clouds, strips and street-like grids in drawing coordinates.
let seed = 20240;
function rnd() {
  seed = (seed * 1664525 + 1013904223) % 4294967296;
  return seed / 4294967296;
}
let dim = '', lit = '';
function dot(x, y) {
  const s = `M${Math.round(x)} ${Math.round(y)}.5h`;
  if (rnd() < 0.4) lit += s + '1'; else dim += s + (rnd() < 0.5 ? 2 : 1);
}
function cloud(x1, y1, x2, y2, n) {
  for (let i = 0; i < n; i++) dot(x1 + rnd() * (x2 - x1), y1 + rnd() * (y2 - y1));
}
function strip(pts, n, j) {
  for (let i = 0; i < n; i++) {
    const t = rnd() * (pts.length - 1), k = Math.floor(t), f = t - k;
    dot(pts[k][0] + (pts[k + 1][0] - pts[k][0]) * f + (rnd() - 0.5) * j,
        pts[k][1] + (pts[k + 1][1] - pts[k][1]) * f + (rnd() - 0.5) * j);
  }
}
// Short bursts of points around each vertex.
function knots(pts, n, j) {
  for (const [x, y] of pts)
    for (let i = 0; i < n; i++) dot(x + (rnd() - 0.5) * j, y + (rnd() - 0.5) * j);
}
function mesh(x1, y1, x2, y2, dx, dy, keep) {
  for (let y = y1; y <= y2; y += dy)
    for (let x = x1; x <= x2; x += dx)
      if (rnd() < keep) dot(x + (rnd() - 0.5) * 4, y + (rnd() - 0.5) * 2);
}

// West side
strip([[397, 200], [408, 222], [425, 236], [436, 250], [455, 262], [475, 275], [500, 295], [520, 300]], 110, 14);
cloud(440, 252, 453, 262, 26);
strip([[500, 298], [570, 296]], 45, 10);
strip([[570, 296], [650, 288], [684, 286]], 35, 14);
cloud(666, 284, 681, 308, 30);
cloud(485, 215, 680, 280, 32);
mesh(468, 312, 585, 540, 12, 12, 0.8);
mesh(585, 312, 692, 540, 14, 13, 0.65);
for (const y of [368, 405, 415, 449, 475, 488, 500, 514, 527]) strip([[468, y], [585, y]], 16, 3);
strip([[630, 378], [670, 390], [700, 380]], 24, 12);
cloud(465, 300, 700, 560, 150);
cloud(480, 395, 492, 435, 16);
strip([[640, 410], [632, 430], [628, 445], [648, 443]], 28, 6);
strip([[590, 543], [594, 560], [584, 575], [556, 572], [550, 590], [542, 615], [560, 628], [595, 637]], 85, 12);
cloud(550, 600, 600, 640, 34);
cloud(590, 545, 625, 565, 14);
strip([[405, 586], [450, 580], [510, 590], [515, 560]], 50, 16);
strip([[510, 568], [600, 568], [690, 580]], 50, 14);
strip([[690, 580], [684, 605], [684, 640], [650, 660]], 35, 12);
cloud(684, 632, 767, 690, 84);
cloud(560, 590, 690, 665, 65);
strip([[690, 560], [705, 535], [735, 510]], 16, 9);
cloud(308, 548, 376, 606, 74);
cloud(285, 180, 460, 550, 75);
cloud(290, 600, 760, 790, 115);

// Between the two districts
mesh(700, 320, 960, 560, 16, 16, 0.5);
cloud(690, 300, 960, 560, 120);
strip([[690, 300], [820, 304], [890, 308], [960, 330], [1010, 348], [1060, 375], [1090, 392]], 50, 10);
strip([[690, 383], [800, 386], [985, 387]], 24, 6);

// East side
strip([[985, 391], [1085, 392], [1200, 385]], 95, 18);
mesh(988, 390, 1035, 560, 12, 13, 0.55);
mesh(1035, 400, 1200, 560, 15, 13, 0.5);
cloud(985, 380, 1215, 520, 110);
cloud(1095, 382, 1195, 425, 85);
cloud(1160, 390, 1195, 440, 55);
strip([[1198, 390], [1196, 440], [1200, 490]], 65, 10);
cloud(1195, 400, 1212, 495, 30);
knots([[1103, 390], [1100, 410], [1097, 430], [1093, 445], [1089, 462], [1085, 475], [1083, 485], [1078, 500], [1074, 510], [1066, 540], [1063, 555]], 6, 11);
cloud(970, 500, 1110, 580, 100);
cloud(1100, 480, 1240, 580, 75);
cloud(946, 565, 1010, 607, 100);
strip([[950, 597], [1050, 592], [1070, 570], [1095, 569]], 75, 10);
strip([[1008, 592], [990, 610], [987, 625], [1005, 642], [1040, 660]], 95, 14);
cloud(1012, 642, 1038, 660, 40);
strip([[1010, 610], [1060, 605]], 24, 5);
cloud(1094, 608, 1127, 628, 36);
cloud(1112, 602, 1125, 614, 18);
cloud(1100, 625, 1150, 690, 62);
strip([[1040, 660], [1080, 680], [1140, 685]], 20, 12);
cloud(838, 560, 945, 636, 110);
strip([[832, 635], [960, 637], [1020, 635]], 35, 6);
cloud(1000, 275, 1430, 360, 75);
knots([[1222, 376], [1240, 378], [1255, 382], [1275, 383], [1300, 376], [1325, 378], [1345, 374], [1362, 374], [1380, 376], [1398, 384], [1413, 386], [1432, 392]], 6, 12);
cloud(1400, 340, 1545, 560, 45);
knots([[1273, 402], [1268, 418], [1262, 447], [1256, 464], [1251, 482], [1245, 500], [1240, 513], [1234, 530]], 4, 7);
knots([[1355, 392], [1350, 410], [1342, 427], [1334, 440], [1318, 445], [1308, 446], [1304, 455], [1300, 477], [1289, 480], [1291, 495], [1281, 520], [1278, 540], [1271, 560], [1265, 577], [1261, 590], [1257, 612], [1251, 628], [1244, 647], [1240, 664], [1236, 680], [1230, 697], [1225, 715], [1225, 727], [1238, 733]], 4, 8);
knots([[1393, 403], [1387, 427], [1383, 435], [1379, 450], [1374, 462], [1378, 465], [1373, 478], [1369, 493], [1365, 508], [1360, 522], [1356, 538], [1355, 547], [1350, 563]], 4, 9);
cloud(1240, 600, 1340, 740, 22);
cloud(1290, 190, 1300, 330, 3);
cloud(1000, 180, 1290, 270, 6);

document.getElementById('points').setAttribute('d', dim);
document.getElementById('bright').setAttribute('d', lit);
```
